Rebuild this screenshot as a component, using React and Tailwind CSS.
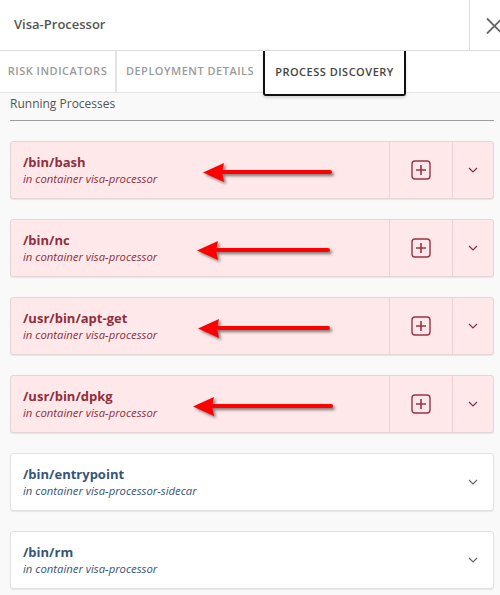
import React from "react";

const processes = [
  { path: "/bin/bash", container: "visa-processor", risky: true, arrow: { left: 182, width: 145 } },
  { path: "/bin/nc", container: "visa-processor", risky: true, arrow: { left: 176, width: 149 } },
  { path: "/usr/bin/apt-get", container: "visa-processor", risky: true, arrow: { left: 177, width: 148 } },
  { path: "/usr/bin/dpkg", container: "visa-processor", risky: true, arrow: { left: 172, width: 156 } },
  { path: "/bin/entrypoint", container: "visa-processor-sidecar", risky: false },
  { path: "/bin/rm", container: "visa-processor", risky: false },
];

function Chevron({ className }) {
  return (
    <svg width="10" height="6" viewBox="0 0 10 6" className={className}>
      <path d="M1 1l4 4 4-4" fill="none" stroke="currentColor" strokeWidth="1.2" />
    </svg>
  );
}

function PlusBox() {
  return (
    <svg width="20" height="20" viewBox="0 0 20 20" className="text-[#9b3444]">
      <rect x="1" y="1" width="18" height="18" rx="3" fill="none" stroke="currentColor" strokeWidth="1.4" />
      <path d="M10 5v10M5 10h10" stroke="currentColor" strokeWidth="1.6" />
    </svg>
  );
}

// red annotation arrows drawn over the risky rows
function Arrow({ left, width }) {
  return (
    <svg
      width={width}
      height="30"
      viewBox={`0 0 ${width} 30`}
      className="absolute top-[16px] pointer-events-none"
      style={{ left, filter: "drop-shadow(2px 2px 1.5px rgba(0,0,0,0.5))" }}
    >
      <path d={`M30 14H${width - 8}`} stroke="#ff0000" strokeWidth="4" strokeLinecap="round" />
      <path d="M10 14.5L31 5L29 14.5L31 24Z" fill="#ff0000" />
    </svg>
  );
}

function ProcessCard({ p }) {
  const risky = p.risky;
  return (
    <div
      className={`relative flex h-[58px] rounded-[3px] border shadow-[0_1px_1px_rgba(0,0,0,0.08)] ${
        risky ? "bg-[#ffe8e9] border-[#e3d6d7]" : "bg-white border-[#e2e2e2]"
      }`}
    >
      <div className="flex flex-1 flex-col justify-center pl-3">
        <div
          className={`text-[13px] leading-[18px] font-bold ${risky ? "text-[#8e2f3e]" : "text-[#365578]"}`}
        >
          {p.path}
        </div>
        <div
          className={`text-[11.3px] leading-[16px] italic ${risky ? "text-[#8e2f3e]" : "text-[#365578]"}`}
        >
          in container {p.container}
        </div>
      </div>
      {risky && (
        <div className="flex w-[63px] items-center justify-center border-l border-[#f6cfd2]">
          <PlusBox />
        </div>
      )}
      <div
        className={`flex w-[41px] items-center justify-center ${
          risky ? "border-l border-[#f6cfd2] text-[#8e2f3e]" : "text-[#666]"
        }`}
      >
        <Chevron />
      </div>
      {p.arrow && <Arrow left={p.arrow.left} width={p.arrow.width} />}
    </div>
  );
}

export default function App() {
  return (
    <div className="h-[595px] w-[500px] overflow-hidden bg-[#f9f9f9] font-['Open_Sans',sans-serif]">
      <div className="flex h-[51px] border-b border-[#dedede] bg-white">
        <div className="flex flex-1 items-center pl-[14px] text-[13px] font-semibold text-[#555]">
          Visa-Processor
        </div>
        <div className="flex w-[31px] items-center justify-end border-l border-[#dedede]">
          <svg width="14" height="17" viewBox="0 0 14 17" className="text-[#666]">
            <path d="M1 1.5l15 15M16 1.5l-15 15" stroke="currentColor" strokeWidth="1.8" />
          </svg>
        </div>
      </div>
      <div className="flex h-[42px] border-b border-[#e4e4e4] bg-white">
        <div className="flex w-[117px] items-center justify-center border-r-2 border-[#e4e4e4] text-[11px] font-semibold tracking-[0.5px] text-[#9a9a9a]">
          RISK INDICATORS
        </div>
        <div className="flex w-[146px] items-center justify-center text-[11px] font-semibold tracking-[0.5px] text-[#9a9a9a]">
          DEPLOYMENT DETAILS
        </div>
        <div className="relative z-10 flex h-[45px] w-[143px] items-center justify-center rounded-b-[3px] border-2 border-t-0 border-[#111] bg-white text-[11px] font-semibold tracking-[0.5px] text-[#444] shadow-[0_2px_3px_rgba(0,0,0,0.15)]">
          PROCESS DISCOVERY
        </div>
      </div>
      <div className="px-[10px] pr-[6px]">
        <div className="border-b border-[#9c9c9c] pt-[2px] pb-[8px] text-[12px] leading-[17px] text-[#555]">
          Running Processes
        </div>
        <div className="flex flex-col gap-[20px] pt-[20px]">
          {processes.map((p) => (
            <ProcessCard key={p.path} p={p} />
          ))}
        </div>
      </div>
    </div>
  );
}
